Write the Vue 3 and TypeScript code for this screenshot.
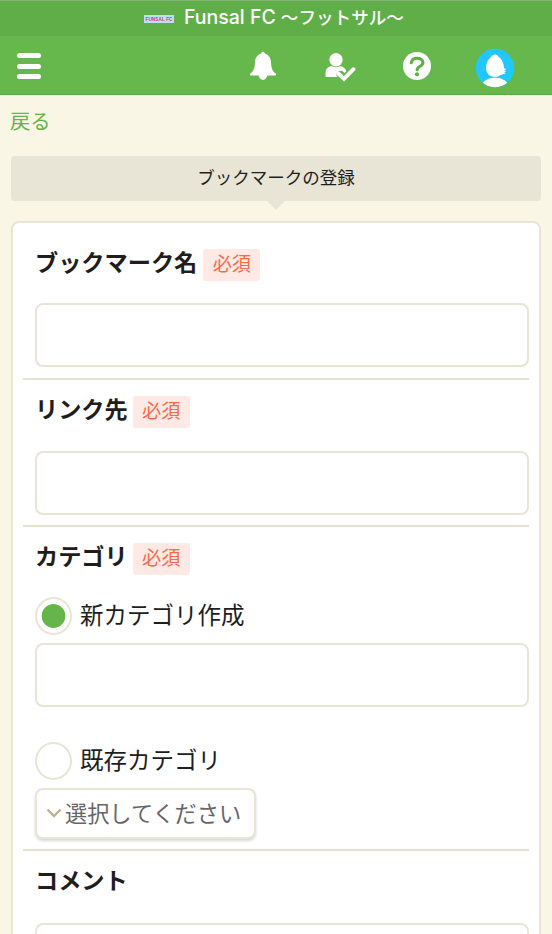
<script setup lang="ts">
import { ref } from 'vue'

const bookmarkName = ref('')
const linkUrl = ref('')
const categoryMode = ref<'new' | 'existing'>('new')
const newCategory = ref('')
const comment = ref('')
</script>

<template>
  <div class="screen">
    <div class="team-bar">
      <svg class="team-logo" width="30" height="8" viewBox="0 0 30 8">
        <rect width="30" height="8" fill="#b5e2f8" />
        <text x="1.5" y="6.2" textLength="27" lengthAdjust="spacingAndGlyphs">FUNSAL FC</text>
      </svg>
      <span class="team-name"><span class="latin">Funsal FC</span><span class="kana">〜フットサル〜</span></span>
    </div>

    <header class="nav">
      <button class="menu" type="button"><i></i><i></i><i></i></button>
      <div class="actions">
        <svg class="bell" width="28" height="30" viewBox="0 0 28 30" fill="#fff">
          <path d="M14 .8c.9 0 1.600.7 1.800 1.600 4 1.200 6 4.400 6.200 8.600.3 6.300 1.300 9 4.400 11.300 1.100.9.800 2.200-.6 2.200h-7.400C17.700 27 16.200 28.900 14 28.900S10.300 27 9.600 24.500H2.200c-1.400 0-1.700-1.300-.6-2.200C4.700 20 5.700 17.300 6 11c.2-4.200 2.200-7.400 6.200-8.600.2-.9.900-1.600 1.800-1.600z" />
        </svg>
        <svg class="attendance" width="32" height="30" viewBox="0 0 32 30">
          <circle cx="12" cy="7.800" r="6.700" fill="#fff" />
          <path d="M1.500 24v-3.200c0-4 3-6.500 6.500-6.500 2.500 1.100 5.500 1.100 8 0 3 0 5.500 2 6.300 5l-1.800 1.700-1.800-1.700c-1.800-1.500-5.800.3-6.400 3.300 0 1 .5 1.800 1.100 2.500H3c-1 0-1.500-.4-1.500-1.100z" fill="#fff" />
          <path d="M14.500 21.800l5.500 5 9.500-9.600" fill="none" stroke="#fff" stroke-width="3.900" stroke-linecap="round" />
        </svg>
        <svg class="help" width="30" height="30" viewBox="0 0 30 30">
          <circle cx="15" cy="15" r="14" fill="#fff" />
          <path d="M9.300 11.800c.5-3 2.700-4.500 5.900-4.500 3.300 0 5.800 1.600 5.800 4.200 0 4-5.700 3.400-5.900 7.300" fill="none" stroke="#5db044" stroke-width="3" stroke-linecap="round" />
          <circle cx="15" cy="23.300" r="2.100" fill="#5db044" />
        </svg>
        <svg class="avatar" width="40" height="40" viewBox="0 0 40 40">
          <defs><clipPath id="avatar-clip"><circle cx="20" cy="20" r="19.200" /></clipPath></defs>
          <g clip-path="url(#avatar-clip)">
            <rect width="40" height="40" fill="#20c8ff" />
            <ellipse cx="20" cy="38.500" rx="13.500" ry="9" fill="#fff" />
            <path d="M20 6.500c1.800 0 3.200 1 3.700 2.500 3.300 2 5 6 5.300 11l2.300 1.500-2 .8 2 1.200-2.200.7 1.700 1.300-2.400.6c-1 .7-2 1-3.100 1-1 1.400-3 1.900-5.300 1.900-5.300 0-9-4-9-9 0-4.500 2-8.800 5-11.100.6-1.400 2.200-2.400 4-2.400z" fill="#fff" />
          </g>
        </svg>
      </div>
    </header>

    <main>
      <a class="back">戻る</a>
      <h1>ブックマークの登録</h1>

      <form class="card" @submit.prevent>
        <section class="field name">
          <div class="label">ブックマーク名<span class="required">必須</span></div>
          <input v-model="bookmarkName" type="text" />
        </section>

        <section class="field">
          <div class="label">リンク先<span class="required">必須</span></div>
          <input v-model="linkUrl" type="text" />
        </section>

        <section class="field category">
          <div class="label">カテゴリ<span class="required">必須</span></div>
          <label class="choice">
            <input v-model="categoryMode" type="radio" value="new" />
            <span>新カテゴリ作成</span>
          </label>
          <input v-model="newCategory" type="text" />
          <label class="choice existing">
            <input v-model="categoryMode" type="radio" value="existing" />
            <span>既存カテゴリ</span>
          </label>
          <button class="select" type="button">
            <svg width="16" height="11" viewBox="0 0 16 11">
              <path d="M1.500 1.500L8 8L14.500 1.500" fill="none" stroke="#b8b392" stroke-width="2.400" />
            </svg>
            <span>選択してください</span>
          </button>
        </section>

        <section class="field comment">
          <div class="label">コメント</div>
          <input v-model="comment" type="text" />
        </section>
      </form>
    </main>
  </div>
</template>

<style>
body {
  background: #faf6e5;
  overflow: hidden;
}
</style>

<style scoped>
.screen {
  height: 934px;
  overflow: hidden;
  background: #faf6e5;
  color: #1e1e1e;
  font-family: "Noto Sans CJK JP", sans-serif;
}
.screen * {
  box-sizing: border-box;
}
.team-bar {
  display: flex;
  align-items: center;
  height: 36px;
  padding-left: 144px;
  border-top: 1px solid #85b277;
  background: #5fae47;
}
.team-logo {
  overflow: visible;
}
.team-logo text {
  fill: #e0405c;
  font: bold 6px "Liberation Sans", sans-serif;
}
.team-name {
  display: flex;
  gap: 5px;
  height: 34px;
  margin: -3px 0 0 10px;
  color: #fff;
  line-height: 34px;
  white-space: nowrap;
}
.latin {
  font-family: Inter, sans-serif;
  font-size: 19.500px;
  font-weight: 500;
}
.kana {
  font-size: 17.600px;
  font-weight: 500;
}
.nav {
  display: flex;
  justify-content: space-between;
  height: 59px;
  padding: 0 37px 0 17px;
  border-bottom: 1px solid #5aab40;
  background: #66b84c;
}
.menu {
  display: flex;
  flex-direction: column;
  gap: 5.500px;
  width: 24px;
  padding: 17px 0 0;
  border: 0;
  background: none;
}
.menu i {
  height: 5px;
  border-radius: 3px;
  background: #fff;
}
.actions {
  display: flex;
  align-items: flex-start;
}
.bell {
  margin-top: 15px;
}
.attendance {
  margin: 16px 0 0 47px;
}
.help {
  margin: 15px 0 0 46px;
}
.avatar {
  margin: 12px 0 0 43px;
}
main {
  padding: 11px 11px 0;
}
.back {
  display: block;
  height: 50px;
  margin-left: -1px;
  color: #62b549;
  font-size: 20.300px;
  line-height: 29px;
}
h1 {
  position: relative;
  height: 45px;
  margin: 0 0 20px;
  border-radius: 4px;
  background: #e8e5d6;
  font-size: 17.500px;
  font-weight: 400;
  line-height: 42px;
  text-align: center;
}
h1::after {
  position: absolute;
  top: 44px;
  left: 255px;
  border: solid transparent;
  border-width: 10px 10px 0;
  border-top-color: #e8e5d6;
  content: "";
}
.card {
  padding: 10px 10px 0;
  border: 2px solid #e8e5d6;
  border-radius: 8px;
  background: #fff;
}
.field {
  height: 147px;
  padding-left: 12px;
}
.field + .field {
  border-top: 2px solid #e5e2d1;
}
.name {
  height: 145px;
}
.label {
  display: flex;
  height: 71px;
  padding-top: 8px;
  font-size: 23.200px;
  font-weight: 700;
  line-height: 40px;
}
.name .label {
  height: 70px;
}
.category .label {
  height: 70px;
}
.comment .label {
  height: 72px;
}
.required {
  width: 57px;
  height: 32px;
  margin: 8px 0 0 5px;
  border-radius: 3px;
  background: #ffe9e5;
  color: #f8694a;
  font-size: 19.200px;
  font-weight: 400;
  line-height: 29px;
  text-align: center;
}
.name .required {
  margin-left: 6px;
}
input[type="text"] {
  display: block;
  width: 494px;
  height: 64px;
  margin: 0;
  border: 2px solid #e8e5d6;
  border-radius: 8px;
  background: #fff;
  outline: 0;
}
.category {
  height: 324px;
}
.choice {
  display: flex;
  align-items: center;
  height: 38px;
  font-size: 23.500px;
  line-height: 36px;
}
.choice span {
  margin: -5px 0 0 8px;
}
.choice input {
  width: 37px;
  height: 38px;
  margin: 0;
  border: 2px solid #e8e5d6;
  border-radius: 50%;
  appearance: none;
}
.choice input:checked {
  background: radial-gradient(circle, #64b54a 11.500px, #fff 12.200px);
}
.choice + input[type="text"] {
  margin-top: 8px;
}
.existing {
  margin-top: 35px;
}
.select {
  display: flex;
  align-items: center;
  width: 221px;
  height: 51px;
  margin-top: 8px;
  padding: 0 0 0 9px;
  border: 2px solid #e8e5d6;
  border-radius: 8px;
  background: #fff;
  box-shadow: 0 2px 3px rgb(0 0 0 / 16%);
  color: #666;
  font-family: inherit;
  font-size: 22.200px;
  line-height: 46px;
  white-space: nowrap;
}
.select span {
  margin: -3px 0 0 3px;
}
</style>
